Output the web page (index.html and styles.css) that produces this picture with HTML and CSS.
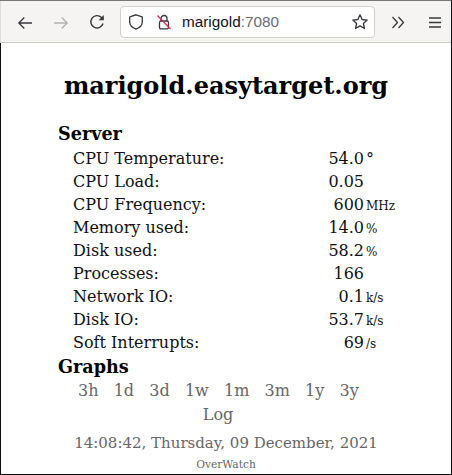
FILE: index.html
```html
<!DOCTYPE html>
<html lang="en">
<head>
    <meta charset="UTF-8">
    <title>marigold.easytarget.org</title>
    <link rel="stylesheet" href="styles.css">
</head>
<body>
    <div class="window">
        <!-- Browser toolbar -->
        <div class="toolbar">
            <svg class="back" width="16" height="16" viewBox="0 0 16 16"><path d="M15 9H1.800M7.300 3.500 1.800 9l5.500 5.500" fill="none" stroke="#38383d" stroke-width="1.300"/></svg>
            <svg class="fwd" width="16" height="16" viewBox="0 0 16 16"><path d="M1 9h13.200M8.700 3.500 14.200 9l-5.500 5.500" fill="none" stroke="#b1b1b3" stroke-width="1.300"/></svg>
            <svg class="reload" width="16" height="16" viewBox="0 0 16 16"><path d="M14 9.500A6.200 6.200 0 1 1 12.300 3.300L14 5.300" fill="none" stroke="#38383d" stroke-width="1.400"/><path d="M14.800 1v5.200H9.600z" fill="#38383d"/></svg>
            <div class="urlbar">
                <svg width="16" height="16" viewBox="0 0 16 16"><path d="M8 .8 14.300 3v5c0 3.500-2.800 5.800-6.300 7.200-3.500-1.400-6.300-3.700-6.300-7.200V3z" fill="none" stroke="#38383d" stroke-width="1.300"/></svg>
                <svg class="lock" width="16" height="16" viewBox="0 0 16 16"><path d="M5 7V4.500a3 3 0 0 1 6 0V7M3.500 8.500c0-1 .6-1.500 1.500-1.500h6c1 0 1.500.6 1.500 1.500v5c0 .8-.6 1.300-1.500 1.300H5c-1 0-1.500-.5-1.500-1.300z" fill="none" stroke="#38383d" stroke-width="1.300"/><path d="M1.500 1.500l13 13.500" stroke="#e22850" stroke-width="1.300"/></svg>
                <span class="url">marigold<span class="port">:7080</span></span>
                <svg class="star" width="18" height="18" viewBox="0 0 18 18"><path d="M9 1.800 11.100 6.500l5.100.6-3.800 3.400 1.100 5-4.500-2.600-4.500 2.600 1.100-5L1.800 7.100l5.100-.6z" fill="none" stroke="#38383d" stroke-width="1.300" stroke-linejoin="round"/></svg>
            </div>
            <svg class="more" width="16" height="16" viewBox="0 0 16 16"><path d="M2.500 3 7.500 8.500 2.500 14M8.500 3l5 5.500-5 5.500" fill="none" stroke="#38383d" stroke-width="1.300"/></svg>
            <svg class="menu" width="16" height="16" viewBox="0 0 16 16"><path d="M2 4h12M2 8.500h12M2 13h12" fill="none" stroke="#38383d" stroke-width="1.300"/></svg>
        </div>

        <!-- Page -->
        <div class="page">
            <h1>marigold.easytarget.org</h1>
            <h2>Server</h2>
            <div class="stats">
                <span>CPU Temperature:</span><span class="val">54.0</span><span class="unit deg">°</span>
                <span>CPU Load:</span><span class="val">0.05</span><span class="unit"></span>
                <span>CPU Frequency:</span><span class="val">600</span><span class="unit">MHz</span>
                <span>Memory used:</span><span class="val">14.0</span><span class="unit">%</span>
                <span>Disk used:</span><span class="val">58.2</span><span class="unit">%</span>
                <span>Processes:</span><span class="val">166</span><span class="unit"></span>
                <span>Network IO:</span><span class="val">0.1</span><span class="unit">k/s</span>
                <span>Disk IO:</span><span class="val">53.7</span><span class="unit">k/s</span>
                <span>Soft Interrupts:</span><span class="val">69</span><span class="unit">/s</span>
            </div>
            <h2>Graphs</h2>
            <div class="links">
                <a>3h</a><a>1d</a><a>3d</a><a>1w</a><a>1m</a><a>3m</a><a>1y</a><a>3y</a>
            </div>
            <div class="log"><a>Log</a></div>
            <div class="time">14:08:42, Thursday, 09 December, 2021</div>
            <div class="credit">OverWatch</div>
        </div>
    </div>
</body>
</html>
```

FILE: styles.css
```css
html, body {
    margin: 0;
    padding: 0;
    background: white;
}
.window {
    width: 452px;
    height: 475px;
    box-sizing: border-box;
    border-top: 1px solid #777;
    border-right: 1px solid #111;
    border-bottom: 1px solid #111;
    display: flex;
    flex-direction: column;
    overflow: hidden;
}
.toolbar {
    height: 42px;
    flex: none;
    box-sizing: border-box;
    background: #f5f4f2;
    border-bottom: 1px solid #cfcecb;
    border-left: 1px solid #ddd;
    display: flex;
    align-items: center;
    padding: 0 0 0 16px;
}
.fwd { margin-left: 20px; }
.reload { margin-left: 20px; }
.urlbar {
    margin-left: 15px;
    width: 255px;
    height: 32px;
    box-sizing: border-box;
    background: white;
    border: 1px solid #d0cfcc;
    border-radius: 4px;
    display: flex;
    align-items: center;
    padding: 0 5px 0 7px;
}
.lock { margin-left: 12px; }
.url {
    margin-left: 10px;
    flex: 1;
    font-family: "Liberation Sans", sans-serif;
    font-size: 15.3px;
    color: #15141a;
}
.port { color: #6b6b6f; }
.more { margin-left: 15px; }
.menu { margin-left: 21px; }
.page {
    flex: 1;
    border-left: 1px solid #111;
    padding: 0 0 0 57px;
    font-family: "DejaVu Serif", serif;
    font-size: 16px;
    color: #000;
}
h1 {
    margin: 27px 0 0 -57px;
    font-size: 24px;
    line-height: 32px;
    text-align: center;
}
h2 {
    margin: 0;
    font-size: 17.6px;
    line-height: 25px;
}
h1 + h2 { margin-top: 19px; }
.stats {
    display: grid;
    grid-template-columns: 251px 40px auto;
    grid-auto-rows: 23px;
    align-items: baseline;
    line-height: 23px;
    padding-left: 15px;
    margin-top: 1px;
    color: #111;
}
.val { text-align: right; }
.unit {
    font-size: 12px;
    margin-left: 2px;
}
.deg { font-size: 16px; }
.links {
    display: flex;
    gap: 15.2px;
    padding-left: 20px;
    line-height: 23px;
    color: #666;
}
.log {
    margin-left: -73px;
    text-align: center;
    line-height: 23px;
    margin-top: 1px;
    color: #666;
}
.time {
    margin: 6px 0 0 -57px;
    text-align: center;
    font-size: 15px;
    line-height: 22px;
    color: #666;
}
.credit {
    margin: 5px 0 0 -57px;
    text-align: center;
    font-size: 10.67px;
    line-height: 12px;
    color: #666;
}
```
